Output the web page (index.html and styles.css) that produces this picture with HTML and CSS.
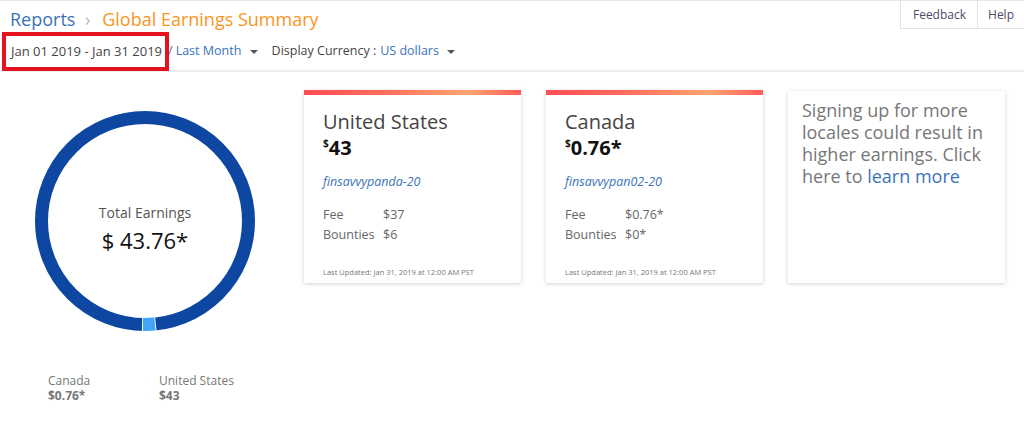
FILE: index.html
```html
<!DOCTYPE html>
<html lang="en">
<head>
    <meta charset="UTF-8">
    <title>Global Earnings Summary</title>
    <link rel="stylesheet" href="styles.css">
</head>
<body>
    <div class="topbar">
        <div class="breadcrumb">
            <a class="crumb" href="#">Reports</a>
            <span class="sep">&rsaquo;</span>
            <span class="current">Global Earnings Summary</span>
        </div>
        <div class="top-buttons">
            <a class="top-btn" href="#">Feedback</a>
            <a class="top-btn" href="#">Help</a>
        </div>
    </div>
    <div class="filters">
        <span class="date-range">Jan 01 2019 - Jan 31 2019</span>
        <span class="slash">/</span>
        <a class="drop" href="#">Last Month <span class="caret"></span></a>
        <span class="label">Display Currency :</span>
        <a class="drop" href="#">US dollars <span class="caret"></span></a>
    </div>

    <div class="main">
        <div class="chart-col">
            <div class="donut">
                <svg width="220" height="220" viewBox="0 0 220 220">
                    <circle cx="110" cy="110" r="103.5" fill="none" stroke="#0d47a1" stroke-width="13"/>
                    <path d="M107.1 213.5 A103.5 103.5 0 0 0 120.8 212.9" fill="none" stroke="#fff" stroke-width="14"/>
                    <path d="M108 213.5 A103.5 103.5 0 0 0 119.9 213" fill="none" stroke="#42a5f5" stroke-width="13"/>
                </svg>
                <div class="donut-center">
                    <div class="donut-label">Total Earnings</div>
                    <div class="donut-value">$ 43.76*</div>
                </div>
            </div>
            <div class="legend">
                <div class="legend-item">
                    <div class="legend-name">Canada</div>
                    <div class="legend-value">$0.76*</div>
                </div>
                <div class="legend-item">
                    <div class="legend-name">United States</div>
                    <div class="legend-value">$43</div>
                </div>
            </div>
        </div>

        <div class="card">
            <h3>United States</h3>
            <div class="amount"><sup>$</sup>43</div>
            <a class="tag" href="#">finsavvypanda-20</a>
            <table class="breakdown">
                <tr><td>Fee</td><td>$37</td></tr>
                <tr><td>Bounties</td><td>$6</td></tr>
            </table>
            <div class="updated">Last Updated: Jan 31, 2019 at 12:00 AM PST</div>
        </div>

        <div class="card">
            <h3>Canada</h3>
            <div class="amount"><sup>$</sup>0.76*</div>
            <a class="tag" href="#">finsavvypan02-20</a>
            <table class="breakdown">
                <tr><td>Fee</td><td>$0.76*</td></tr>
                <tr><td>Bounties</td><td>$0*</td></tr>
            </table>
            <div class="updated">Last Updated: Jan 31, 2019 at 12:00 AM PST</div>
        </div>

        <div class="card promo">
            Signing up for more locales could result in higher earnings. Click here to <a href="#">learn more</a>
        </div>
    </div>
</body>
</html>
```

FILE: styles.css
```css
body {
    margin: 0;
    font-family: 'Open Sans', sans-serif;
    color: #333;
    background: #fff;
}
a {
    text-decoration: none;
    color: #3b73b9;
}
.topbar {
    display: flex;
    justify-content: space-between;
    border-top: 1px solid #e6e6e6;
}
.breadcrumb {
    padding: 6px 0 0 10px;
    font-size: 18px;
    line-height: 24px;
}
.crumb {
    color: #3b73b9;
}
.sep {
    color: #bbb;
    margin: 0 7px 0 5px;
}
.current {
    color: #f7961e;
}
.top-buttons {
    display: flex;
    height: 28px;
}
.top-btn {
    border-left: 1px solid #e3e3e3;
    border-bottom: 1px solid #e3e3e3;
    padding: 0 11px 0 12px;
    font-size: 12px;
    line-height: 28px;
    color: #4d4a66;
}
.top-btn:last-child {
    padding: 0 10px;
}
.filters {
    display: flex;
    align-items: center;
    height: 39px;
    padding-left: 11px;
    font-size: 12.5px;
    color: #444;
    border-bottom: 2px solid #eee;
}
.date-range {
    position: relative;
    font-size: 13px;
}
.date-range::after {
    content: "";
    position: absolute;
    left: -9px;
    right: -7px;
    top: -10px;
    bottom: -11px;
    border: 4px solid #e5121f;
}
.slash {
    color: #3b73b9;
    margin: 0 3px 0 6px;
}
.drop {
    margin-right: 14px;
}
.caret {
    display: inline-block;
    width: 0;
    height: 0;
    margin-left: 5px;
    vertical-align: middle;
    border-left: 4px solid transparent;
    border-right: 4px solid transparent;
    border-top: 4px solid #555;
}
.label {
    margin-right: 4px;
}
.main {
    display: flex;
    align-items: flex-start;
    padding-top: 18px;
}
.chart-col {
    width: 304px;
    flex-shrink: 0;
}
.donut {
    position: relative;
    width: 220px;
    height: 220px;
    margin: 21px 0 0 35px;
}
.donut svg {
    display: block;
}
.donut-center {
    position: absolute;
    inset: 0;
    display: flex;
    flex-direction: column;
    align-items: center;
    justify-content: center;
    padding-top: 16px;
    box-sizing: border-box;
}
.donut-label {
    font-size: 14px;
    color: #555;
}
.donut-value {
    font-size: 22px;
    color: #111;
    margin-top: 3px;
}
.legend {
    display: flex;
    margin: 42px 0 0 48px;
}
.legend-item {
    width: 111px;
    font-size: 12px;
    line-height: 15px;
    color: #777;
}
.legend-value {
    font-weight: bold;
}
.card {
    flex-shrink: 0;
    width: 217px;
    height: 193px;
    margin-right: 25px;
    padding: 14px 19px 0;
    box-sizing: border-box;
    border-top: 5px solid transparent;
    border-image: linear-gradient(90deg, #ff4d55, #ff6a5b 35%, #ffa56e 75%, #ff5a58) 1;
    border-bottom: 0;
    border-left: 0;
    border-right: 0;
    box-shadow: 0 1px 4px rgba(0, 0, 0, 0.18);
    position: relative;
}
.card h3 {
    margin: 0;
    font-size: 20px;
    font-weight: normal;
    color: #444;
    line-height: 26px;
}
.amount {
    font-size: 20px;
    font-weight: bold;
    color: #111;
    line-height: 26px;
}
.amount sup {
    font-size: 10px;
    vertical-align: top;
    line-height: 16px;
}
.tag {
    display: block;
    margin-top: 12px;
    font-size: 12.5px;
    font-style: italic;
}
.breakdown {
    margin-top: 15px;
    border-collapse: collapse;
    font-size: 12.5px;
    color: #666;
}
.breakdown td {
    padding: 0;
    line-height: 20px;
}
.breakdown td:first-child {
    width: 60px;
}
.updated {
    position: absolute;
    left: 19px;
    bottom: 6px;
    font-size: 7.5px;
    color: #777;
}
.promo {
    border-top: 0;
    border-image: none;
    margin-top: 1px;
    margin-right: 0;
    height: 192px;
    padding: 8px 14px;
    font-size: 18px;
    line-height: 22px;
    color: #777;
}
```
